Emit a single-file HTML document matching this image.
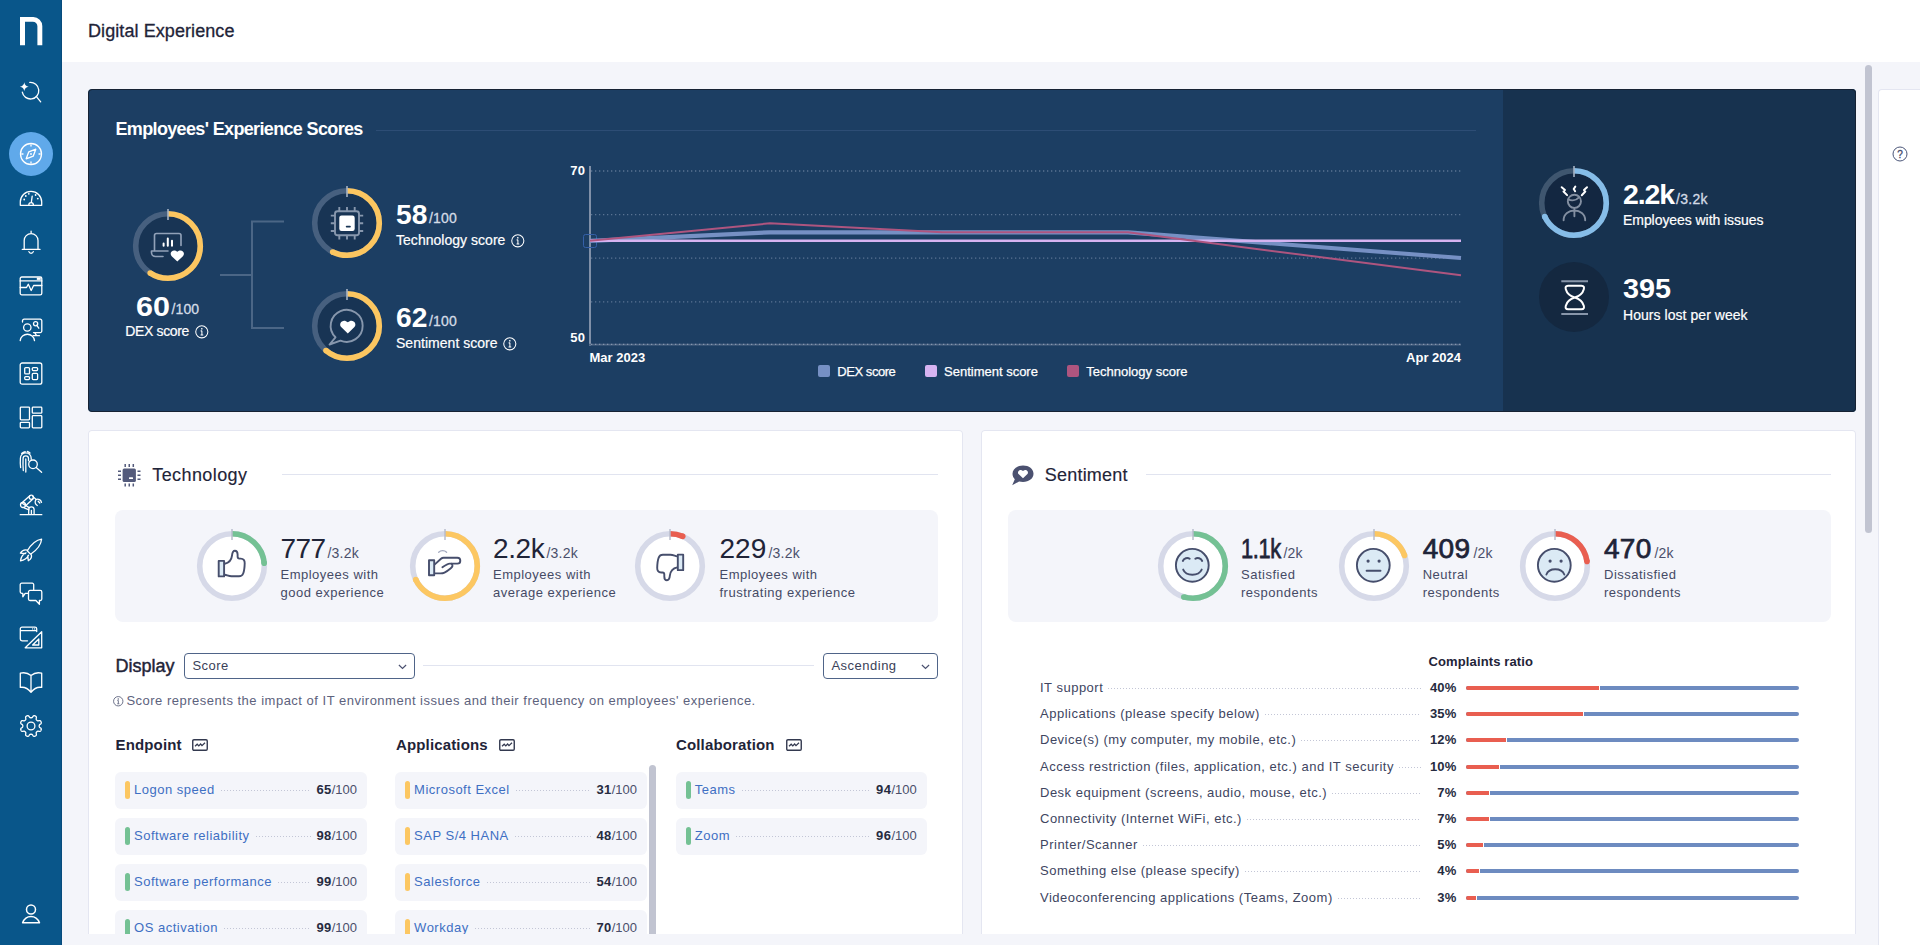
<!DOCTYPE html>
<html lang="en">
<head>
<meta charset="utf-8">
<title>Digital Experience</title>
<style>
*{box-sizing:border-box;margin:0;padding:0}
html,body{width:1920px;height:945px;overflow:hidden}
body{position:relative;background:#f4f5fa;font-family:"Liberation Sans",sans-serif;color:#1f2438;font-size:13px}
.abs{position:absolute}
svg{display:block;overflow:visible}
/* sidebar */
#side{position:absolute;left:0;top:0;width:62px;height:945px;background:#09568a;border-right:1px solid #074b7c}
#side .ic{position:absolute;left:19px;width:24px;height:24px}
#side .ic svg{width:24px;height:24px;fill:none;stroke:#fff;stroke-width:1.3;stroke-linecap:round;stroke-linejoin:round}
#side .act{position:absolute;left:9px;top:132px;width:44px;height:44px;border-radius:50%;background:#60a9ea}
/* top bar */
#top{position:absolute;left:62px;top:0;width:1858px;height:62px;background:#fff}
#top h1{position:absolute;left:26px;top:20px;font-size:18px;line-height:22px;font-weight:400;color:#1f2438;-webkit-text-stroke:0.3px #1f2438;white-space:nowrap;letter-spacing:.08px}
/* hero */
#hero{position:absolute;left:88px;top:89px;width:1768px;height:323px;background:#1c3e63;border-radius:4px;overflow:hidden;color:#fff}
#hero:after{content:"";position:absolute;left:0;top:0;right:0;bottom:0;border:1px solid #162233;border-radius:4px;pointer-events:none}
#hero .right{position:absolute;left:1415px;top:0;width:353px;height:323px;background:#17324f}
.t{position:absolute;white-space:nowrap}
.num{font-size:28.500px;line-height:32px;font-weight:700;transform-origin:0 50%;transform:scaleX(1.05)}
/* cards */
.card{position:absolute;top:430px;height:520px;background:#fff;box-shadow:inset 0 0 0 1px #e4e6f1;border-radius:4px;overflow:hidden}
#tech{left:88px;width:875px}
#sent{left:981px;width:875px}
.panel{position:absolute;top:80px;height:112px;background:#f4f5fa;border-radius:8px}
.int{letter-spacing:.5px}
/*CARDCSS*/
.h2{font-size:18px;line-height:22px;color:#1f2438;-webkit-text-stroke:.15px #1f2438}
.h3{font-size:15px;line-height:18px;font-weight:700;letter-spacing:.15px;color:#1f2438}
.hr{height:1px;background:#e1e4f0}
.big{font-size:28px;line-height:32px;color:#1f2438}
.big.b{-webkit-text-stroke:.75px #1f2438}
.den{font-size:14px;line-height:18px;color:#4a4f6b;letter-spacing:.2px}
.lbl{font-size:13px;line-height:18px;color:#454a65;letter-spacing:.5px}
.sel{height:26px;border:1px solid #4f6488;border-radius:4px;background:#fff;color:#3a3f58;font-size:13px;line-height:24px;padding-left:7.400px}
.row{position:absolute;width:252px;height:37px;border-radius:6px;background:#f4f5fa;display:flex;align-items:center;padding:0 10px 1.500px 10px;white-space:nowrap;font-size:13px}
.row i{display:block;width:5px;height:18px;border-radius:2.500px;margin-right:4.500px;flex:none}
.row a{color:#3e6fc3;margin-left:-.400px}
.row u,.crow u{flex:1;height:1px;margin:1px 5px 0 6px;background-image:linear-gradient(90deg,#c3c6d6 1px,transparent 1px);background-size:3px 1px;text-decoration:none}
.row b{color:#262b40;letter-spacing:.4px}
.row s{color:#4a4f6b;text-decoration:none}
.crow{position:absolute;left:59px;width:416.500px;height:18px;display:flex;align-items:center;white-space:nowrap;font-size:13px;line-height:18px;color:#40455f}
.crow b{color:#262b40;min-width:28px;text-align:right;letter-spacing:.2px}
.crow u{margin:1px 8px 0 5px}
.bar{left:485px;width:333px;height:4px;border-radius:2px;background:#6d8bc0}
.bar i{display:block;height:4px;border-radius:2px 0 0 2px;background:#e95e50;border-right:1px solid #fff;box-sizing:content-box}
/*ENDCARDCSS*/
/* misc */
#vscroll{position:absolute;left:1865px;top:65px;width:7px;height:468px;border-radius:4px;background:#c1c4d1}
#rpanel{position:absolute;left:1878px;top:89px;width:42px;height:856px;background:#fff;border:1px solid #e4e6f1;border-right:none;border-bottom:none;border-radius:4px 0 0 0}
#bstrip{position:absolute;left:62px;top:934px;width:1816px;height:11px;background:#f4f5fa}
</style>
</head>
<body>

<!-- SIDEBAR -->
<div id="side">
<!--SIDE-START-->
<div class="act"></div>
<svg class="abs" style="left:19.700px;top:17px" width="23" height="29" viewBox="0 0 23 29"><path d="M0 28.300V0H13.300A9 9 0 0 1 22.300 9V28.300H17.400V9.300A4.600 4.600 0 0 0 12.800 4.700H5V28.300z" fill="#fff"/></svg>
<div class="ic" style="top:80px"><svg viewBox="0 0 24 24"><path d="M10.800 2.400A8.300 8.300 0 1 1 3.300 12.100M17.400 16.600L21.700 21.800"/><path d="M5.300 2.300Q5.800 6.200 9.700 6.700Q5.800 7.200 5.300 11.100Q4.800 7.200 .9 6.700Q4.800 6.200 5.300 2.300z" fill="#fff" stroke="none"/></svg></div>
<div class="ic" style="top:142px"><svg viewBox="0 0 24 24"><circle cx="12" cy="12" r="10.500"/><path d="M16.800 7.200L14.200 14.200L7.200 16.800L9.800 9.800z"/><circle cx="12" cy="12" r=".9" fill="#fff" stroke="none"/><path d="M12 2.800V4M12 20V21.200M2.800 12H4M20 12H21.200" stroke-width="1.300"/></svg></div>
<div class="ic" style="top:186px"><svg viewBox="0 0 24 24"><path d="M1.300 19.300V16A10.700 10.700 0 0 1 22.700 16V19.300z"/><path d="M9.800 19A2.300 2.300 0 0 1 14.400 19M12.300 16.600L13.200 10.200"/><g fill="#fff" stroke="none"><circle cx="5.200" cy="13.500" r=".9"/><circle cx="6.800" cy="10" r=".9"/><circle cx="9.800" cy="7.800" r=".9"/><circle cx="16.600" cy="9" r=".9"/><circle cx="18.800" cy="12.600" r=".9"/></g></svg></div>
<div class="ic" style="top:230px"><svg viewBox="0 0 24 24"><path d="M3.300 19.400H21M5.200 19.400V10.500A6.900 6.900 0 0 1 19 10.500V19.400M12.100 1.200V3.500M9.900 21.600A2.300 2.300 0 0 0 14.300 21.600"/></svg></div>
<div class="ic" style="top:274px"><svg viewBox="0 0 24 24"><rect x="1.200" y="3" width="21.600" height="17.800" rx="1.600"/><path d="M1.200 6.900H22.800M1.200 13.500H7.500L9.300 10.300L12.200 16.500L14.600 11.500H22.800"/><rect x="17.800" y="3.600" width="4" height="2.300" fill="#fff" stroke="none"/></svg></div>
<div class="ic" style="top:318px"><svg viewBox="0 0 24 24"><path d="M3.500 4V2.800A1.600 1.600 0 0 1 5.100 1.200H21.200A1.600 1.600 0 0 1 22.800 2.800V13A1.600 1.600 0 0 1 21.200 14.600H14.500M15.800 14.800L17.600 17.600M14.200 17.700H20.400"/><circle cx="8.300" cy="9.500" r="3.700"/><path d="M1.200 22.600A7.200 7.200 0 0 1 15.500 22.600"/><circle cx="16.600" cy="5.700" r="2.100"/><path d="M17.800 7.400L19.800 10.200"/></svg></div>
<div class="ic" style="top:362px"><svg viewBox="0 0 24 24"><rect x="1.200" y="1" width="21.600" height="21.200" rx="2"/><rect x="5.700" y="5.600" width="4.800" height="6.300" rx="1"/><rect x="13.300" y="5.600" width="5.300" height="3" rx="1"/><rect x="5.700" y="14.600" width="4.800" height="3" rx="1"/><rect x="13.300" y="11.300" width="5.300" height="6.300" rx="1"/></svg></div>
<div class="ic" style="top:406px"><svg viewBox="0 0 24 24"><rect x="1.300" y="1.100" width="9.200" height="12.800" rx=".8"/><rect x="13.300" y="1.100" width="9.500" height="6.100" rx=".8"/><rect x="1.300" y="16.300" width="9.200" height="5.600" rx=".8"/><rect x="13.300" y="9.600" width="9.500" height="12.300" rx=".8"/></svg></div>
<div class="ic" style="top:450px"><svg viewBox="0 0 24 24"><path d="M1.600 17.500C1.200 14 1.200 11 1.400 8.200A5.400 5.400 0 0 1 12.200 8.200V9.300M4.300 20.500C3.900 16 3.900 12 4.100 8.600A2.700 2.700 0 0 1 9.500 8.600V10.800M6.800 22V9M2.600 3.400A6.500 6.500 0 0 1 6.200 1.600M8.300 1.500A6.500 6.500 0 0 1 11 3"/><circle cx="14" cy="14.300" r="4.300"/><path d="M17.200 17.500L22.600 22.300"/></svg></div>
<div class="ic" style="top:494px"><svg viewBox="0 0 24 24"><path d="M1.200 20.700H22.800M9.700 20.700V15.600A2.700 2.700 0 0 1 15.100 15.600V20.700M12.400 20.700V16.500"/><path d="M10.200 13.600L3.800 9.800M5.200 13.800L10 15.800M3 8.800L10.800 1.800M6.600 11.800L14.200 4.800M13.800 2.600L17.200 5.400"/><circle cx="4" cy="11" r="2.500"/><circle cx="12.300" cy="3.200" r="2.100"/><path d="M17 5.600C19.500 4.500 22 6 22.500 8.300M17 5.600C15.500 7.500 16 10.200 18.300 11.500M19.200 7.200L20.800 9"/></svg></div>
<div class="ic" style="top:538px"><svg viewBox="0 0 24 24"><path d="M22.600 1.200C17 2 12.500 6 8.200 12.800L11.600 16.200C18 12 22 7 22.600 1.200zM8.600 12.200C5.500 11.200 3 12.500 1.400 15.200L6.500 15.500M12 15.800C13.200 18.800 12 21.300 9.300 22.800L8.800 17.800M7 14.800C4 16 2 19 1.500 22.800C5.200 22.300 8 20.300 9.600 17.300"/></svg></div>
<div class="ic" style="top:582px"><svg viewBox="0 0 24 24"><path d="M9 11.300H6.200L3.800 14.800V11.300H2.600A1.500 1.500 0 0 1 1.200 9.800V2.700A1.500 1.500 0 0 1 2.700 1.200H13.200A1.500 1.500 0 0 1 14.700 2.700V8"/><path d="M11 8.400H21.300A1.500 1.500 0 0 1 22.800 9.900V17A1.500 1.500 0 0 1 21.300 18.500H20.400V22.300L16.900 18.500H11A1.500 1.500 0 0 1 9.500 17V9.900A1.500 1.500 0 0 1 11 8.400z"/></svg></div>
<div class="ic" style="top:626px"><svg viewBox="0 0 24 24"><path d="M8.500 14.800H3A1.700 1.700 0 0 1 1.300 13.100V2.800A1.700 1.700 0 0 1 3 1.100H16A1.700 1.700 0 0 1 17.700 2.800V5.500M1.300 4.700H17.700"/><path d="M22.700 5.800V21.800H6.200zM19.800 13V19H13.600z"/><path d="M13.600 2.900H13.700M15.600 2.900H15.700" stroke-width="1.200"/></svg></div>
<div class="ic" style="top:670px"><svg viewBox="0 0 24 24"><path d="M12 5.600C9 3 5 2.200 1.300 3.200V17.400C5 16.800 9 18.500 12 22.400C15 18.500 19 16.800 22.700 17.400V3.200C19 2.200 15 3 12 5.600zM12 5.600V22.200"/></svg></div>
<div class="ic" style="top:714px"><svg viewBox="0 0 24 24"><path d="M22.04 16.16L21.89 16.48L21.72 16.80L21.51 17.08L21.21 17.32L20.70 17.41L19.94 17.31L19.20 17.16L18.72 17.16L18.43 17.28L18.21 17.45L18.01 17.63L17.82 17.82L17.63 18.01L17.45 18.21L17.28 18.43L17.16 18.72L17.16 19.20L17.31 19.94L17.41 20.70L17.32 21.21L17.08 21.51L16.80 21.72L16.48 21.89L16.16 22.04L15.83 22.17L15.48 22.27L15.13 22.32L14.75 22.27L14.33 21.98L13.86 21.37L13.44 20.74L13.11 20.40L12.82 20.28L12.54 20.24L12.27 20.23L12.00 20.23L11.73 20.23L11.46 20.24L11.18 20.28L10.89 20.40L10.56 20.74L10.14 21.37L9.67 21.98L9.25 22.27L8.87 22.32L8.52 22.27L8.17 22.17L7.84 22.04L7.52 21.89L7.20 21.72L6.92 21.51L6.68 21.21L6.59 20.70L6.69 19.94L6.84 19.20L6.84 18.72L6.72 18.43L6.55 18.21L6.37 18.01L6.18 17.82L5.99 17.63L5.79 17.45L5.57 17.28L5.28 17.16L4.80 17.16L4.06 17.31L3.30 17.41L2.79 17.32L2.49 17.08L2.28 16.80L2.11 16.48L1.96 16.16L1.83 15.83L1.73 15.48L1.68 15.13L1.73 14.75L2.02 14.33L2.63 13.86L3.26 13.44L3.60 13.11L3.72 12.82L3.76 12.54L3.77 12.27L3.77 12.00L3.77 11.73L3.76 11.46L3.72 11.18L3.60 10.89L3.26 10.56L2.63 10.14L2.02 9.67L1.73 9.25L1.68 8.87L1.73 8.52L1.83 8.17L1.96 7.84L2.11 7.52L2.28 7.20L2.49 6.92L2.79 6.68L3.30 6.59L4.06 6.69L4.80 6.84L5.28 6.84L5.57 6.72L5.79 6.55L5.99 6.37L6.18 6.18L6.37 5.99L6.55 5.79L6.72 5.57L6.84 5.28L6.84 4.80L6.69 4.06L6.59 3.30L6.68 2.79L6.92 2.49L7.20 2.28L7.52 2.11L7.84 1.96L8.17 1.83L8.52 1.73L8.87 1.68L9.25 1.73L9.67 2.02L10.14 2.63L10.56 3.26L10.89 3.60L11.18 3.72L11.46 3.76L11.73 3.77L12.00 3.77L12.27 3.77L12.54 3.76L12.82 3.72L13.11 3.60L13.44 3.26L13.86 2.63L14.33 2.02L14.75 1.73L15.13 1.68L15.48 1.73L15.83 1.83L16.16 1.96L16.48 2.11L16.80 2.28L17.08 2.49L17.32 2.79L17.41 3.30L17.31 4.06L17.16 4.80L17.16 5.28L17.28 5.57L17.45 5.79L17.63 5.99L17.82 6.18L18.01 6.37L18.21 6.55L18.43 6.72L18.72 6.84L19.20 6.84L19.94 6.69L20.70 6.59L21.21 6.68L21.51 6.92L21.72 7.20L21.89 7.52L22.04 7.84L22.17 8.17L22.27 8.52L22.32 8.87L22.27 9.25L21.98 9.67L21.37 10.14L20.74 10.56L20.40 10.89L20.28 11.18L20.24 11.46L20.23 11.73L20.23 12.00L20.23 12.27L20.24 12.54L20.28 12.82L20.40 13.11L20.74 13.44L21.37 13.86L21.98 14.33L22.27 14.75L22.32 15.13L22.27 15.48L22.17 15.83z"/><circle cx="12" cy="12" r="3.900"/></svg></div>
<div class="ic" style="top:902px"><svg viewBox="0 0 24 24"><circle cx="12" cy="7.500" r="4.500" stroke-width="1.500"/><path d="M3.600 20.700C5.500 15.800 9 14.400 12 14.400C15 14.400 18.500 15.800 20.500 20.700z" stroke-width="1.500"/></svg></div>
<!--SIDE-END-->
</div>

<!-- TOP BAR -->
<div id="top"><h1>Digital Experience</h1></div>

<!-- HERO -->
<div id="hero">
<div class="right"></div>
<!--HERO-START-->
<div class="t" style="left:27.500px;top:29px;font-size:18px;line-height:22px;font-weight:700;letter-spacing:-.65px">Employees' Experience Scores</div>
<div class="abs" style="left:288px;top:41px;width:1100px;height:1px;background:#2d4d75"></div>

<!-- connector -->
<svg class="abs" style="left:0;top:0" width="400" height="323"><path d="M132 186H164M196 132.5H164V239H196" fill="none" stroke="#4b6686" stroke-width="2"/></svg>

<!-- DEX ring -->
<svg class="abs" style="left:45px;top:122px" width="70" height="70" viewBox="0 0 70 70">
<circle cx="35" cy="35" r="32.3" fill="#183454" stroke="#47607f" stroke-width="5.6"/>
<circle cx="35" cy="35" r="32.3" fill="none" stroke="#fcc660" stroke-width="5.6" stroke-dasharray="120.4 300" transform="rotate(-90 35 35)"/>
<circle cx="17.17" cy="61.93" r="2.8" fill="#fcc660"/>
<line x1="35" y1="-2" x2="35" y2="9" stroke="#a7b3c4" stroke-width="1.6"/>
<g fill="none" stroke="#91a1b8" stroke-width="1.650" stroke-linecap="round" stroke-linejoin="round"><path d="M21.5 39.5V24.5a2 2 0 0 1 2-2h22.5a2 2 0 0 1 2 2V34.5"/><path d="M35 40H18.5v1.5a4 4 0 0 0 4 4H30"/></g>
<g stroke="#fff" stroke-width="2" stroke-linecap="round"><path d="M30.6 32.5V34.8M34.8 27.5V34.8M39 29.8V34.8"/></g>
<path d="M44.3 50.6l-5.6-5.4c-3.2-3.3 1.6-8.300 5.600-4.4c4-3.9 8.800 1.100 5.600 4.400z" fill="#fff"/>
</svg>
<div class="t num" style="left:48.300px;top:200.600px;transform:scaleX(1.07)">60</div>
<div class="t" style="left:83.600px;top:211px;letter-spacing:.1px;font-size:14px;line-height:18px;color:#d3dbe6;-webkit-text-stroke:.3px #d3dbe6">/100</div>
<div class="t" style="left:37.300px;top:233.400px;-webkit-text-stroke:.2px #fff;font-size:14px;line-height:18px;letter-spacing:-.35px">DEX score</div>
<svg class="abs" style="left:106.900px;top:236px" width="13.600" height="13.600" viewBox="0 0 13 13"><circle cx="6.500" cy="6.500" r="5.800" fill="none" stroke="#fff" stroke-width="1"/><path d="M6.600 5.600V9.500M5.400 5.600H6.600M5.300 9.600H7.900" stroke="#fff" stroke-width="1" fill="none"/><circle cx="6.500" cy="3.600" r=".8" fill="#fff"/></svg>

<!-- TECH ring -->
<svg class="abs" style="left:224px;top:99px" width="70" height="70" viewBox="0 0 70 70">
<circle cx="35" cy="35" r="32.3" fill="#183454" stroke="#47607f" stroke-width="5.6"/>
<circle cx="35" cy="35" r="32.3" fill="none" stroke="#fcc660" stroke-width="5.6" stroke-dasharray="116.3 300" transform="rotate(-90 35 35)"/>
<circle cx="20.69" cy="63.96" r="2.8" fill="#fcc660"/>
<line x1="35" y1="-2" x2="35" y2="9" stroke="#a7b3c4" stroke-width="1.6"/>
<g fill="none" stroke="#8797ad" stroke-width="1.900"><rect x="23" y="23.300" width="24" height="24" rx="2.500"/><path d="M27.300 23V19M35 23V19M42.700 23V19M27.300 47.600V51.600M35 47.600V51.600M42.700 47.600V51.600M23 27.600H18.800M23 35.300H18.800M23 43H18.800M47 27.600H51.200M47 35.300H51.200M47 43H51.200"/></g>
<rect x="27.300" y="27.600" width="15.400" height="15.400" rx="2.200" fill="#fff"/>
<rect x="33.800" y="37.800" width="5" height="1.700" rx=".8" fill="#183454"/>
</svg>
<div class="t num" style="left:307.600px;top:109.200px;transform:scaleX(.99)">58</div>
<div class="t" style="left:341px;top:120.300px;font-size:14px;line-height:18px;letter-spacing:.2px;color:#d3dbe6;-webkit-text-stroke:.3px #d3dbe6">/100</div>
<div class="t" style="left:308px;top:141.800px;font-size:14px;line-height:18px;letter-spacing:.03px;-webkit-text-stroke:.2px #fff">Technology score</div>
<svg class="abs" style="left:423px;top:144.700px" width="13.600" height="13.600" viewBox="0 0 13 13"><circle cx="6.500" cy="6.500" r="5.800" fill="none" stroke="#fff" stroke-width="1"/><path d="M6.600 5.600V9.500M5.400 5.600H6.600M5.300 9.600H7.900" stroke="#fff" stroke-width="1" fill="none"/><circle cx="6.500" cy="3.600" r=".8" fill="#fff"/></svg>

<!-- SENT ring -->
<svg class="abs" style="left:224px;top:202px" width="70" height="70" viewBox="0 0 70 70">
<circle cx="35" cy="35" r="32.3" fill="#183454" stroke="#47607f" stroke-width="5.6"/>
<circle cx="35" cy="35" r="32.3" fill="none" stroke="#fcc660" stroke-width="5.6" stroke-dasharray="124.4 300" transform="rotate(-90 35 35)"/>
<circle cx="13.94" cy="59.49" r="2.8" fill="#fcc660"/>
<line x1="35" y1="-2" x2="35" y2="9" stroke="#a7b3c4" stroke-width="1.6"/>
<path d="M23.500 46.300A16 16 0 1 1 28.500 49.600L17.500 53.500z" fill="none" stroke="#8797ad" stroke-width="1.900" stroke-linejoin="round"/>
<path d="M35.800 42.400l-6.400-6.100c-3.700-3.800 1.800-9.500 6.400-5c4.600-4.500 10.100 1.200 6.400 5z" fill="#fff"/>
</svg>
<div class="t num" style="left:307.600px;top:212.200px;transform:scaleX(.99)">62</div>
<div class="t" style="left:341px;top:223.300px;font-size:14px;line-height:18px;letter-spacing:.2px;color:#d3dbe6;-webkit-text-stroke:.3px #d3dbe6">/100</div>
<div class="t" style="left:308px;top:244.800px;font-size:14px;line-height:18px;letter-spacing:.03px;-webkit-text-stroke:.2px #fff">Sentiment score</div>
<svg class="abs" style="left:415px;top:247.700px" width="13.600" height="13.600" viewBox="0 0 13 13"><circle cx="6.500" cy="6.500" r="5.800" fill="none" stroke="#fff" stroke-width="1"/><path d="M6.600 5.600V9.500M5.400 5.600H6.600M5.300 9.600H7.900" stroke="#fff" stroke-width="1" fill="none"/><circle cx="6.500" cy="3.600" r=".8" fill="#fff"/></svg>

<!-- CHART -->
<svg class="abs" style="left:460px;top:60px" width="940" height="250" viewBox="548 149 940 250">
<g stroke="#5a7393" stroke-width="1.3" stroke-dasharray="1.300 2.700" fill="none"><path d="M591 171H1461M591 214.600H1461M591 258.200H1461M591 301.800H1461"/></g>
<path d="M590 166V345.700" stroke="#8090a8" stroke-width="2" fill="none"/>
<path d="M589 344.600H1461" stroke="#4e6685" stroke-width="1.800" fill="none"/><path d="M591 344.300H1461" stroke="#8495ad" stroke-width="1.200" stroke-dasharray="1.300 2.700" fill="none"/>
<rect x="583.500" y="234.500" width="13" height="13" rx="2" fill="none" stroke="#3560a8" stroke-width="1"/>
<polyline points="590,240.800 770,232.300 1128,232.300 1461,258" fill="none" stroke="#7690c4" stroke-width="4.200" stroke-linejoin="round"/>
<polyline points="590,240.800 1461,240.800" fill="none" stroke="#d6b3f1" stroke-width="2.600"/>
<polyline points="590,240.800 770,223.300 942,232.300 1128,232.300 1461,275.300" fill="none" stroke="#ae557f" stroke-width="2" stroke-linejoin="round"/>
<g font-family="Liberation Sans" font-weight="700" font-size="13" fill="#fff">
<text x="585.300" y="174.600" text-anchor="end" letter-spacing=".3">70</text>
<text x="585.300" y="341.800" text-anchor="end" letter-spacing=".3">50</text>
<text x="589.500" y="362.300">Mar 2023</text>
<text x="1461" y="362.300" text-anchor="end">Apr 2024</text>
</g>
<rect x="818" y="365" width="12" height="12" rx="2" fill="#7690c4"/>
<rect x="925" y="365" width="12" height="12" rx="2" fill="#d6b3f1"/>
<rect x="1067" y="365" width="12" height="12" rx="2" fill="#ae557f"/>
<g font-family="Liberation Sans" font-size="13" fill="#fff" stroke="#fff" stroke-width=".25">
<text x="837.300" y="375.700" letter-spacing="-.45">DEX score</text>
<text x="944" y="375.700">Sentiment score</text>
<text x="1086.300" y="375.700">Technology score</text>
</g>
</svg>

<!-- RIGHT -->
<svg class="abs" style="left:1451px;top:79px" width="70" height="70" viewBox="0 0 70 70">
<circle cx="35" cy="35" r="32.3" fill="#132741" stroke="#3f566f" stroke-width="5.6"/>
<circle cx="35" cy="35" r="32.3" fill="none" stroke="#86bde8" stroke-width="5.6" stroke-dasharray="138.1 300" transform="rotate(-90 35 35)"/>
<circle cx="5.73" cy="48.65" r="2.800" fill="#86bde8"/>
<line x1="35" y1="-2" x2="35" y2="9" stroke="#a7b3c4" stroke-width="1.600"/>
<g fill="none" stroke="#838fa1" stroke-width="1.900" stroke-linecap="round"><circle cx="35.400" cy="33.300" r="6.600"/><path d="M29.200 31.400c3.500 1.500 8 1 10.500-1.800"/><path d="M35.400 40.300V48.300M24.600 52.300c0-13 21.600-13 21.600 0"/></g>
<g fill="none" stroke="#fff" stroke-width="2" stroke-linecap="round" stroke-linejoin="round"><path d="M22.700 19.200l3.300 2.700-1.500 1.600 3.600 3.600M36.300 18.600l-1.600 2.400 1.400 2.200M48 19.200l-3 2.800 1.300 1.500-3.500 3.700"/></g>
</svg>
<div class="t num" style="left:1535px;top:89.300px;transform:none;letter-spacing:-1.100px">2.2k</div>
<div class="t" style="left:1588px;top:100.500px;font-size:14px;line-height:18px;letter-spacing:.3px;color:#d3dbe6;-webkit-text-stroke:.3px #d3dbe6">/3.2k</div>
<div class="t" style="left:1535px;top:122.300px;font-size:14px;line-height:18px;letter-spacing:-.06px;-webkit-text-stroke:.2px #fff">Employees with issues</div>

<svg class="abs" style="left:1451px;top:173px" width="70" height="70" viewBox="0 0 70 70">
<circle cx="35" cy="35" r="35" fill="#142840"/>
<path d="M22.300 19.200H49M22.300 52H49" stroke="#8896aa" stroke-width="2" fill="none"/>
<path d="M29 23.800H42.500c2.500 0 2.800 1.500 2.300 3.500c-1.200 4.500-5 7-9 8.200c-4-1.200-7.800-3.700-9-8.200c-.5-2-.2-3.500 2.200-3.500zM29 47.200H42.500c2.500 0 2.800-1.500 2.300-3.500c-1.200-4.500-5-7-9-8.200c-4 1.200-7.800 3.700-9 8.200c-.5 2-.2 3.500 2.200 3.500z" fill="none" stroke="#fff" stroke-width="2" stroke-linejoin="round"/>
</svg>
<div class="t num" style="left:1535px;top:183.200px;transform:scaleX(1.01)">395</div>
<div class="t" style="left:1535px;top:216.900px;font-size:14px;line-height:18px;letter-spacing:.05px;-webkit-text-stroke:.2px #fff">Hours lost per week</div>
<!--HERO-END-->
</div>

<!-- TECHNOLOGY CARD -->
<div id="tech" class="card">
<!--TECH-START-->
<svg class="abs" style="left:29.500px;top:33.700px" width="22.500" height="22.500" viewBox="0 0 22.500 22.500"><rect x="4.600" y="4.600" width="13.300" height="13.300" rx="1.500" fill="#535a7b"/><path d="M7.200 0V3M11.250 0V3M15.300 0V3M7.200 19.500V22.500M11.250 19.500V22.500M15.300 19.500V22.500M0 7.200H3M0 11.250H3M0 15.300H3M19.500 7.200H22.500M19.500 11.250H22.500M19.500 15.300H22.500" stroke="#535a7b" stroke-width="1.500" fill="none"/><rect x="11" y="13.300" width="4" height="1.700" rx=".5" fill="#fff"/></svg>
<div class="t h2" style="left:64.300px;top:34px;letter-spacing:.4px">Technology</div>
<div class="abs hr" style="left:194px;top:44px;width:656px"></div>
<div class="panel" style="left:27px;width:823px"></div>
<svg class="abs" style="left:109.2px;top:101.3px" width="70" height="70" viewBox="0 0 70 70"><circle cx="35" cy="35" r="32.3" fill="#fff" stroke="#d6d9e8" stroke-width="5.6"/><circle cx="35" cy="35" r="32.3" fill="none" stroke="#74c194" stroke-width="5.6" stroke-dasharray="47.9 300" transform="rotate(-90 35 35)"/><circle cx="67.17" cy="32.14" r="2.8" fill="#74c194"/><line x1="35" y1="-2" x2="35" y2="9" stroke="#b9bdcd" stroke-width="1.500"/><g fill="none" stroke="#464e6c" stroke-width="1.900" stroke-linejoin="round" stroke-linecap="round"><rect x="21.700" y="29.900" width="5.400" height="15.500" fill="#dbeaf5"/><path d="M27.700 32.700C31.200 32 34.400 29.600 35 24.600C35.300 21.500 35.900 19.800 37.900 19.800C39.900 19.800 40.600 21.300 40.600 23.600V25.600C40.600 27 41.200 27.600 42.400 27.600H43.800C46.500 27.600 47.800 29.400 47.700 32.200C47.600 36.200 47.200 40 46.200 42.500C45.400 44.500 44 45.300 42 45.300H34.500C31.800 45.300 30.200 44.200 27.700 43.700"/></g></svg>
<svg class="abs" style="left:322.2px;top:101.3px" width="70" height="70" viewBox="0 0 70 70"><circle cx="35" cy="35" r="32.3" fill="#fff" stroke="#d6d9e8" stroke-width="5.6"/><circle cx="35" cy="35" r="32.3" fill="none" stroke="#fcc762" stroke-width="5.6" stroke-dasharray="138.1 300" transform="rotate(-90 35 35)"/><circle cx="5.73" cy="48.65" r="2.8" fill="#fcc762"/><line x1="35" y1="-2" x2="35" y2="9" stroke="#b9bdcd" stroke-width="1.500"/><g fill="none" stroke="#464e6c" stroke-width="1.900" stroke-linejoin="round" stroke-linecap="round"><rect x="19" y="29.200" width="5.200" height="15" fill="#dbeaf5"/><path d="M24.800 33.400L31 27.800C31.800 27.100 32.500 26.800 33.600 26.800H47.400A2.900 2.900 0 0 1 47.400 32.600H39.800C37.500 32.600 35.500 34 32.400 36.300"/><path d="M41.700 32.800C43.200 34.400 42.400 35.900 40.800 37.200C38.500 39.100 36.200 40.800 34.500 41.600C33 42.300 32 42.400 30.500 42.400H24.800"/><path d="M28.700 21.200C30.800 19.200 34.500 19.200 36.600 21.200" stroke="#a3a9bf" stroke-width="1.300"/></g></svg>
<svg class="abs" style="left:547.2px;top:101.3px" width="70" height="70" viewBox="0 0 70 70"><circle cx="35" cy="35" r="32.3" fill="#fff" stroke="#d6d9e8" stroke-width="5.6"/><circle cx="35" cy="35" r="32.3" fill="none" stroke="#e95e50" stroke-width="5.6" stroke-dasharray="13.1 300" transform="rotate(-90 35 35)"/><circle cx="47.76" cy="5.33" r="2.8" fill="#e95e50"/><line x1="35" y1="-2" x2="35" y2="9" stroke="#b9bdcd" stroke-width="1.500"/><g transform="translate(1.200 3.450) rotate(180 34.350 32.800)"><g fill="none" stroke="#464e6c" stroke-width="1.900" stroke-linejoin="round" stroke-linecap="round"><rect x="21.700" y="29.900" width="5.400" height="15.500" fill="#dbeaf5"/><path d="M27.700 32.700C31.200 32 34.400 29.600 35 24.600C35.300 21.500 35.900 19.800 37.900 19.800C39.900 19.800 40.600 21.300 40.600 23.600V25.600C40.600 27 41.200 27.600 42.400 27.600H43.800C46.500 27.600 47.800 29.400 47.700 32.200C47.600 36.200 47.200 40 46.200 42.500C45.400 44.500 44 45.300 42 45.300H34.500C31.800 45.300 30.200 44.200 27.700 43.700"/></g></g></svg>
<div class="t big" style="left:192.5px;top:102.500px;letter-spacing:-0.6px">777</div><div class="t den" style="left:239.5px;top:113.600px">/3.2k</div><div class="t lbl" style="left:192.5px;top:136px">Employees with<br>good experience</div>
<div class="t big" style="left:405px;top:102.500px;letter-spacing:-0.4px">2.2k</div><div class="t den" style="left:458.5px;top:113.600px">/3.2k</div><div class="t lbl" style="left:405px;top:136px">Employees with<br>average experience</div>
<div class="t big" style="left:631.5px;top:102.500px;letter-spacing:0px">229</div><div class="t den" style="left:680.5px;top:113.600px">/3.2k</div><div class="t lbl" style="left:631.5px;top:136px">Employees with<br>frustrating experience</div>
<div class="t" style="left:27.500px;top:224.500px;font-size:18px;line-height:22px;-webkit-text-stroke:.45px #1f2438">Display</div>
<div class="abs sel" style="left:96px;top:223px;width:231px"><span class="int">Score</span><svg class="abs" style="left:212.500px;top:9.700px" width="9" height="6" viewBox="0 0 9 6"><path d="M.9 1L4.500 4.400L8.100 1" fill="none" stroke="#4b5170" stroke-width="1.200"/></svg></div>
<div class="abs hr" style="left:335px;top:235px;width:391px"></div>
<div class="abs sel" style="left:735px;top:223px;width:115px"><span class="int">Ascending</span><svg class="abs" style="left:96.500px;top:9.700px" width="9" height="6" viewBox="0 0 9 6"><path d="M.9 1L4.500 4.400L8.100 1" fill="none" stroke="#4b5170" stroke-width="1.200"/></svg></div>
<svg class="abs" style="left:25px;top:266px" width="10.500" height="10.500" viewBox="0 0 13 13"><circle cx="6.500" cy="6.500" r="5.800" fill="none" stroke="#5d627d" stroke-width="1.100"/><path d="M6.600 5.600V9.500M5.400 5.600H6.600M5.300 9.600H7.900" stroke="#5d627d" stroke-width="1.100" fill="none"/><circle cx="6.500" cy="3.600" r=".9" fill="#5d627d"/></svg>
<div class="t int" style="left:38.400px;top:261.500px;line-height:18px;color:#5d627d">Score represents the impact of IT environment issues and their frequency on employees' experience.</div>
<div class="t h3" style="left:27.5px;top:305.500px">Endpoint</div><svg class="abs" style="left:104px;top:309px" width="16" height="12" viewBox="0 0 16 12"><rect x=".75" y=".75" width="14.500" height="10.500" rx="1.200" fill="none" stroke="#33394f" stroke-width="1.400"/><path d="M3 7.300L5.200 5.200L6.800 6.900L8.600 5L10 6.600L13 3.800" fill="none" stroke="#33394f" stroke-width="1.250"/></svg>
<div class="t h3" style="left:308px;top:305.500px">Applications</div><svg class="abs" style="left:410.7px;top:309px" width="16" height="12" viewBox="0 0 16 12"><rect x=".75" y=".75" width="14.500" height="10.500" rx="1.200" fill="none" stroke="#33394f" stroke-width="1.400"/><path d="M3 7.300L5.200 5.200L6.800 6.900L8.600 5L10 6.600L13 3.800" fill="none" stroke="#33394f" stroke-width="1.250"/></svg>
<div class="t h3" style="left:588px;top:305.500px">Collaboration</div><svg class="abs" style="left:697.5px;top:309px" width="16" height="12" viewBox="0 0 16 12"><rect x=".75" y=".75" width="14.500" height="10.500" rx="1.200" fill="none" stroke="#33394f" stroke-width="1.400"/><path d="M3 7.300L5.200 5.200L6.800 6.900L8.600 5L10 6.600L13 3.800" fill="none" stroke="#33394f" stroke-width="1.250"/></svg>
<div class="row" style="left:27px;top:342px"><i style="background:#fcc762"></i><a class="int">Logon speed</a><u></u><b>65</b><s>/100</s></div>
<div class="row" style="left:27px;top:388px"><i style="background:#74c194"></i><a class="int">Software reliability</a><u></u><b>98</b><s>/100</s></div>
<div class="row" style="left:27px;top:434px"><i style="background:#74c194"></i><a class="int">Software performance</a><u></u><b>99</b><s>/100</s></div>
<div class="row" style="left:27px;top:480px"><i style="background:#74c194"></i><a class="int">OS activation</a><u></u><b>99</b><s>/100</s></div>
<div class="row" style="left:307px;top:342px"><i style="background:#fcc762"></i><a class="int">Microsoft Excel</a><u></u><b>31</b><s>/100</s></div>
<div class="row" style="left:307px;top:388px"><i style="background:#fcc762"></i><a class="int">SAP S/4 HANA</a><u></u><b>48</b><s>/100</s></div>
<div class="row" style="left:307px;top:434px"><i style="background:#fcc762"></i><a class="int">Salesforce</a><u></u><b>54</b><s>/100</s></div>
<div class="row" style="left:307px;top:480px"><i style="background:#fcc762"></i><a class="int">Workday</a><u></u><b>70</b><s>/100</s></div>
<div class="row" style="width:251px;left:587.7px;top:342px"><i style="background:#74c194"></i><a class="int">Teams</a><u></u><b>94</b><s>/100</s></div>
<div class="row" style="width:251px;left:587.7px;top:388px"><i style="background:#74c194"></i><a class="int">Zoom</a><u></u><b>96</b><s>/100</s></div>
<div class="abs" style="left:561px;top:335px;width:7px;height:200px;border-radius:4px;background:#c1c4d1"></div>
<!--TECH-END-->
</div>

<!-- SENTIMENT CARD -->
<div id="sent" class="card">
<!--SENT-START-->
<svg class="abs" style="left:29.500px;top:34.500px" width="23" height="21" viewBox="0 0 23 21"><path d="M12 .5C18 .5 22.500 4 22.500 8.700C22.500 13.400 18 16.900 12 16.900C10.600 16.900 9.300 16.700 8.100 16.400L1.200 20.300L3.800 14.200C2.300 12.700 1.500 10.800 1.500 8.700C1.500 4 6 .5 12 .5z" fill="#4b5170"/><path d="M12 13.300l-4.200-4c-2.400-2.500 1.200-6.200 4.200-3.300c3-2.900 6.600 .8 4.200 3.300z" fill="#fff"/></svg>
<div class="t h2" style="left:63.800px;top:34px;letter-spacing:.2px">Sentiment</div>
<div class="abs hr" style="left:165px;top:44px;width:685px"></div>
<div class="panel" style="left:27px;width:823px"></div>
<svg class="abs" style="left:177.2px;top:101.3px" width="70" height="70" viewBox="0 0 70 70"><circle cx="35" cy="35" r="32.3" fill="#fff" stroke="#d6d9e8" stroke-width="5.6"/><circle cx="35" cy="35" r="32.3" fill="none" stroke="#74c194" stroke-width="5.6" stroke-dasharray="110.8 300" transform="rotate(-90 35 35)"/><circle cx="25.78" cy="65.96" r="2.8" fill="#74c194"/><line x1="35" y1="-2" x2="35" y2="9" stroke="#b9bdcd" stroke-width="1.500"/><g fill="none" stroke="#464e6c" stroke-width="1.900" stroke-linecap="round"><circle cx="34.300" cy="34.300" r="16.400" fill="#dbeaf5"/><path d="M24.800 30C26 27.300 29.400 26.200 31.700 27.700M37.300 27.700C39.600 26.200 43 27.300 44.200 30M25.200 38.600C28 45.400 40.600 45.400 43.700 38.600"/></g></svg>
<svg class="abs" style="left:358.2px;top:101.3px" width="70" height="70" viewBox="0 0 70 70"><circle cx="35" cy="35" r="32.3" fill="#fff" stroke="#d6d9e8" stroke-width="5.6"/><circle cx="35" cy="35" r="32.3" fill="none" stroke="#fcc762" stroke-width="5.6" stroke-dasharray="40.1 300" transform="rotate(-90 35 35)"/><circle cx="65.56" cy="24.55" r="2.8" fill="#fcc762"/><line x1="35" y1="-2" x2="35" y2="9" stroke="#b9bdcd" stroke-width="1.500"/><g fill="none" stroke="#464e6c" stroke-width="1.900" stroke-linecap="round"><circle cx="34.300" cy="34.300" r="16.400" fill="#dbeaf5"/><path d="M27.600 39.800H41.500"/><circle cx="29.100" cy="30.100" r="1.600" fill="#464e6c" stroke="none"/><circle cx="40.100" cy="30.100" r="1.600" fill="#464e6c" stroke="none"/></g></svg>
<svg class="abs" style="left:539.2px;top:101.3px" width="70" height="70" viewBox="0 0 70 70"><circle cx="35" cy="35" r="32.3" fill="#fff" stroke="#d6d9e8" stroke-width="5.6"/><circle cx="35" cy="35" r="32.3" fill="none" stroke="#e95e50" stroke-width="5.6" stroke-dasharray="46.3 300" transform="rotate(-90 35 35)"/><circle cx="66.99" cy="30.56" r="2.8" fill="#e95e50"/><line x1="35" y1="-2" x2="35" y2="9" stroke="#b9bdcd" stroke-width="1.500"/><g fill="none" stroke="#464e6c" stroke-width="1.900" stroke-linecap="round"><circle cx="34.300" cy="34.300" r="16.400" fill="#dbeaf5"/><path d="M26.400 43.500C29 36.500 41.500 36.500 44.300 43.500"/><circle cx="30.100" cy="30.100" r="1.600" fill="#464e6c" stroke="none"/><circle cx="41.100" cy="30.100" r="1.600" fill="#464e6c" stroke="none"/></g></svg>
<div class="t big b" style="left:260px;top:102.500px;letter-spacing:0px"><span style="display:inline-block;transform:scaleX(.78);transform-origin:0 50%;letter-spacing:-.5px">1.1k</span></div><div class="t den" style="left:302.5px;top:113.600px">/2k</div><div class="t lbl" style="left:260px;top:136px">Satisfied<br>respondents</div>
<div class="t big b" style="left:441.7px;top:102.500px;letter-spacing:0.3px">409</div><div class="t den" style="left:492.5px;top:113.600px">/2k</div><div class="t lbl" style="left:441.7px;top:136px">Neutral<br>respondents</div>
<div class="t big b" style="left:623px;top:102.500px;letter-spacing:0.3px">470</div><div class="t den" style="left:673.5px;top:113.600px">/2k</div><div class="t lbl" style="left:623px;top:136px">Dissatisfied<br>respondents</div>
<div class="t" style="left:447.500px;top:223px;font-weight:700;line-height:18px;letter-spacing:.13px;color:#1f2438">Complaints ratio</div>
<div class="crow" style="top:248.7px"><a class="int">IT support</a><u></u><b>40%</b></div>
<div class="abs bar" style="top:255.7px"><i style="width:133.2px"></i></div>
<div class="crow" style="top:274.8px"><a class="int">Applications (please specify below)</a><u></u><b>35%</b></div>
<div class="abs bar" style="top:281.8px"><i style="width:116.5px"></i></div>
<div class="crow" style="top:301.0px"><a class="int">Device(s) (my computer, my mobile, etc.)</a><u></u><b>12%</b></div>
<div class="abs bar" style="top:308.0px"><i style="width:40.0px"></i></div>
<div class="crow" style="top:328.0px"><a class="int">Access restriction (files, application, etc.) and IT security</a><u></u><b>10%</b></div>
<div class="abs bar" style="top:335.0px"><i style="width:33.3px"></i></div>
<div class="crow" style="top:353.5px"><a class="int">Desk equipment (screens, audio, mouse, etc.)</a><u></u><b>7%</b></div>
<div class="abs bar" style="top:360.5px"><i style="width:23.3px"></i></div>
<div class="crow" style="top:379.8px"><a class="int">Connectivity (Internet WiFi, etc.)</a><u></u><b>7%</b></div>
<div class="abs bar" style="top:386.8px"><i style="width:23.3px"></i></div>
<div class="crow" style="top:406.0px"><a class="int">Printer/Scanner</a><u></u><b>5%</b></div>
<div class="abs bar" style="top:413.0px"><i style="width:16.6px"></i></div>
<div class="crow" style="top:432.0px"><a class="int">Something else (please specify)</a><u></u><b>4%</b></div>
<div class="abs bar" style="top:439.0px"><i style="width:13.3px"></i></div>
<div class="crow" style="top:459.0px"><a class="int">Videoconferencing applications (Teams, Zoom)</a><u></u><b>3%</b></div>
<div class="abs bar" style="top:466.0px"><i style="width:10.0px"></i></div>
<!--SENT-END-->
</div>

<div id="vscroll"></div>
<div id="rpanel">
<svg class="abs" style="left:13px;top:56px" width="16" height="16" viewBox="0 0 16 16"><circle cx="8" cy="8" r="7" fill="none" stroke="#4a5578" stroke-width="1"/><text x="8" y="11.6" text-anchor="middle" font-family="Liberation Sans" font-size="10" fill="#3f4a6c" stroke="#3f4a6c" stroke-width=".3">?</text></svg>
</div>
<div id="bstrip"></div>
</body>
</html>
